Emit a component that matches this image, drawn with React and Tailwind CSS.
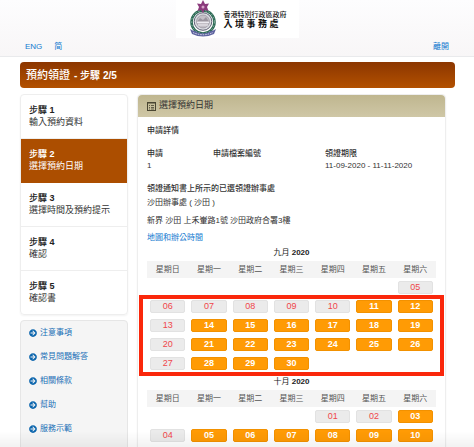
import { FaArrowCircleRight } from 'react-icons/fa';

const steps = [
    { no: 1, label: '輸入預約資料' },
    { no: 2, label: '選擇預約日期' },
    { no: 3, label: '選擇時間及預約提示' },
    { no: 4, label: '確認' },
    { no: 5, label: '確認書' },
];

const helpLinks = ['注意事項', '常見問題解答', '相關條款', '幫助', '服務示範'];

const weekdays = ['星期日', '星期一', '星期二', '星期三', '星期四', '星期五', '星期六'];

const september = [
    ['', '', '', '', '', '', '05'],
    ['06', '07', '08', '09', '10', '11', '12'],
    ['13', '14', '15', '16', '17', '18', '19'],
    ['20', '21', '22', '23', '24', '25', '26'],
    ['27', '28', '29', '30', '', '', ''],
];
const septemberClosed = ['05', '06', '07', '08', '09', '10', '13', '20', '27'];

const october = [
    ['', '', '', '', '01', '02', '03'],
    ['04', '05', '06', '07', '08', '09', '10'],
];
const octoberClosed = ['01', '02', '04'];

const Emblem = () => (
    <svg viewBox="0 0 28 37" className="w-7 h-[37px]" aria-hidden="true">
        <circle cx="14" cy="22" r="11.5" fill="none" stroke="#2f6b57" strokeWidth="2.6" />
        <circle cx="14" cy="22" r="11.5" fill="none" stroke="#8fb8a8" strokeWidth="1" strokeDasharray="1.5 2" />
        <circle cx="14" cy="21.5" r="8.8" fill="#dcdde2" stroke="#4c4d63" strokeWidth="0.9" />
        <circle cx="14" cy="21.5" r="6.5" fill="#c3bfc6" stroke="#8a8794" strokeWidth="0.6" />
        <path d="M8.5 21 L11 18 L14 20 L17 17 L19.500 21 Z" fill="#9a959f" />
        <path d="M8 22.500 H20 M9 25 H19" stroke="#eceaf0" strokeWidth="1" />
        <path d="M1 29 Q4 31 6 31 Q14 36 22 31 Q24 31 27 29 L25 34 Q14 39 3 34 Z" fill="#5f64a0" />
        <path d="M4 32.500 Q14 37 24 32.500" fill="none" stroke="#d9daea" strokeWidth="1" strokeDasharray="1.5 1" />
        <path d="M14 0 L16 4 L20 3.5 L18 7 L19.5 11 L15.5 10 L14 13 L12 10 L8.500 11 L10 7 L8 3.500 L12 4 Z" fill="#8b3a7c" />
        <circle cx="14" cy="7" r="1.500" fill="#d7a3c9" />
    </svg>
);

const ListIcon = () => (
    <svg viewBox="0 0 9 9" className="size-[9px]" fill="none" stroke="#4a4632" aria-hidden="true">
        <rect x="0.5" y="0.5" width="8" height="8" />
        <path d="M0 1 H9" strokeWidth="1" />
        <path d="M2 3.5 H3 M4 3.5 H7 M2 5.5 H3 M4 5.5 H7 M2 7 H3 M4 7 H7" strokeWidth="0.8" />
    </svg>
);

const Calendar = ({ month, year, weeks, closed, highlight }) => (
    <section>
        <h3 className="h-3 mb-0.5 text-center leading-3 text-[#222]">
            {month} <b>{year}</b>
        </h3>
        <div className="relative">
            <table className="w-full table-fixed border-collapse">
                <thead>
                    <tr className="h-[17px] bg-[#f4f4f4] text-[#555]">
                        {weekdays.map((day) => (
                            <th key={day} className="p-0 font-normal leading-3">{day}</th>
                        ))}
                    </tr>
                </thead>
                <tbody className="text-[9px]">
                    {weeks.map((week, w) => (
                        <tr key={w} className="h-[19px]">
                            {week.map((date, d) => (
                                <td key={d} className="px-[3px] py-0">
                                    {date && (
                                        <button
                                            disabled={closed.includes(date)}
                                            className={
                                                closed.includes(date)
                                                    ? 'block w-full h-[13px] rounded-xs border border-[#e2e2e2] bg-[#ebebeb] leading-[11px] text-[#f0464a]'
                                                    : 'block w-full h-[13px] rounded-xs border border-[#f29100] bg-[#ff9b05] leading-[11px] font-bold text-white'
                                            }
                                        >
                                            {date}
                                        </button>
                                    )}
                                </td>
                            ))}
                        </tr>
                    ))}
                </tbody>
            </table>
            {highlight && (
                <div className="absolute -inset-x-2 top-[34px] -bottom-[3px] border-4 border-[#fa270b] pointer-events-none" />
            )}
        </div>
    </section>
);

const App = () => {
    return (
        <div className="h-screen overflow-hidden bg-white text-[8px] text-[#333] font-['Liberation_Sans','Noto_Sans_CJK_TC',sans-serif]">
            <header className="flex flex-col h-[57px] border-b border-[#e9eaec] bg-linear-to-b from-[#fdfdfe] to-[#f8f6f7]">
                <div className="flex self-center w-[123px] h-[38px] bg-white pl-[13px] gap-[7px]">
                    <Emblem />
                    <div className="pt-2.5 whitespace-nowrap text-[#111]">
                        <p className="text-[7px] leading-[9px] font-medium">香港特別行政區政府</p>
                        <p className="text-[9px] leading-[11px] font-bold">入 境 事 務 處</p>
                    </div>
                </div>
                <nav className="flex h-[18px] items-center px-[25px] text-[#1279cf]">
                    <a href="#eng">ENG</a>
                    <a href="#sc" className="ml-3">简</a>
                    <a href="#leave" className="ml-auto">離開</a>
                </nav>
            </header>

            <h1 className="flex items-center h-[26px] mt-[5px] ml-5 mr-[19px] px-1.5 rounded-[4px] bg-linear-to-b from-[#8c3600] to-[#b35100] text-white">
                <span className="text-[11px] font-medium">預約領證</span>
                <span className="ml-1 text-[10px] font-bold">- <span className="font-medium">步</span>驟 2/5</span>
            </h1>

            <div className="flex items-start gap-[9px] mt-1.5 ml-5 mr-7">
                <aside className="w-[108px] shrink-0">
                    <ol className="rounded-[4px] border border-[#eeeeee] shadow-xs text-[9px] leading-3">
                        {steps.map((step) => (
                            <li
                                key={step.no}
                                className={
                                    step.no === 2
                                        ? 'h-11 pt-[9px] px-2 bg-[#ac4e00] text-white'
                                        : 'h-11 pt-[9px] px-2 border-b border-[#eeeeee] last:border-b-0 last:h-[43px]'
                                }
                            >
                                <p className={step.no === 2 ? 'font-bold' : 'font-bold text-[#222]'}>
                                    <span className="font-medium">步</span>驟 {step.no}
                                </p>
                                <p>{step.label}</p>
                            </li>
                        ))}
                    </ol>
                    <ul className="h-40 mt-[5px] rounded-[4px] border border-[#e6e6e6] bg-[#f5f5f5]">
                        {helpLinks.map((link) => (
                            <li key={link} className="h-6 px-2 flex items-center">
                                <a href="#help" className="flex items-center gap-[3px] text-[#1a6fb5]">
                                    <FaArrowCircleRight className="size-2 text-[#0b65ad]" />
                                    {link}
                                </a>
                            </li>
                        ))}
                    </ul>
                </aside>

                <main className="flex-1 min-w-0 h-96 rounded-[4px] border border-[#eeeeee] shadow-xs">
                    <h2 className="flex items-center gap-[3px] h-[22px] px-[9px] rounded-t-[4px] bg-linear-to-b from-[#bfb68f] to-[#cfc7a6] text-[9px] text-[#333]">
                        <ListIcon />
                        選擇預約日期
                    </h2>
                    <div className="px-[9px] pt-2 leading-3">
                        <h3 className="font-medium">申請詳情</h3>
                        <table className="w-full mt-[11px] table-fixed text-left">
                            <thead>
                                <tr>
                                    <th className="p-0 w-[66px] font-medium">申請</th>
                                    <th className="p-0 w-28 font-medium">申請檔案編號</th>
                                    <th className="p-0 font-medium">領證期限</th>
                                </tr>
                            </thead>
                            <tbody>
                                <tr>
                                    <td className="p-0">1</td>
                                    <td className="p-0"></td>
                                    <td className="p-0 whitespace-nowrap">11-09-2020 - 11-11-2020</td>
                                </tr>
                            </tbody>
                        </table>
                        <p className="mt-[11px] font-medium">領證通知書上所示的已選領證辦事處</p>
                        <p className="mt-0.5">沙田辦事處 ( 沙田 )</p>
                        <p className="mt-1.5">新界 沙田 上禾輋路1號 沙田政府合署3樓</p>
                        <a href="#map" className="block w-fit mt-[5px] mb-[3px] text-[#1279cf]">地圖和辦公時間</a>
                        <div className="flex flex-col gap-[3px]">
                            <Calendar month="九月" year="2020" weeks={september} closed={septemberClosed} highlight />
                            <Calendar month="十月" year="2020" weeks={october} closed={octoberClosed} />
                        </div>
                    </div>
                </main>
            </div>
            <div className="fixed inset-x-0 bottom-0 h-4 bg-linear-to-b from-transparent to-black/5 pointer-events-none" />
        </div>
    );
};

export default App;
